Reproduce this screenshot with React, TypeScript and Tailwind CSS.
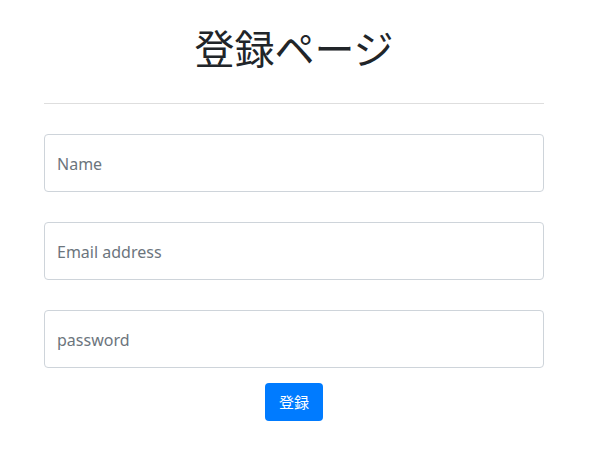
import React, { useState } from 'react';

const fieldClass =
    "w-full h-[58px] rounded-[4px] border border-[#ced4da] bg-white px-3 pt-[2px] text-base text-[#495057] placeholder:text-[#6c757d] outline-none";

const App: React.FC = () => {
    const [form, setForm] = useState({ name: '', email: '', password: '' });

    return (
        <div className="min-h-screen bg-white font-['Noto_Sans','Noto_Sans_CJK_JP',sans-serif] text-[#212529]">
            <div className="ml-[44px] w-[500px] pt-[23px]">
                <h1 className="text-center text-[40px] leading-[48px] font-normal font-['Noto_Sans_CJK_JP',sans-serif]">登録ページ</h1>
                <hr className="mt-[32px] border-t border-[#dedede]" />
                <form className="mt-[30px] flex flex-col" onSubmit={(e) => e.preventDefault()}>
                    <input
                        className={fieldClass}
                        placeholder="Name"
                        value={form.name}
                        onChange={(e) => setForm({ ...form, name: e.target.value })}
                    />
                    <input
                        className={`${fieldClass} mt-[30px]`}
                        placeholder="Email address"
                        value={form.email}
                        onChange={(e) => setForm({ ...form, email: e.target.value })}
                    />
                    <input
                        type="password"
                        className={`${fieldClass} mt-[30px]`}
                        placeholder="password"
                        value={form.password}
                        onChange={(e) => setForm({ ...form, password: e.target.value })}
                    />
                    <div className="mt-[15px] flex justify-center">
                        <button
                            type="submit"
                            className="h-[38px] w-[58px] rounded-[4px] bg-[#007bff] text-[15px] text-white font-['Noto_Sans_CJK_JP',sans-serif]"
                        >
                            登録
                        </button>
                    </div>
                </form>
            </div>
        </div>
    );
};

export default App;
